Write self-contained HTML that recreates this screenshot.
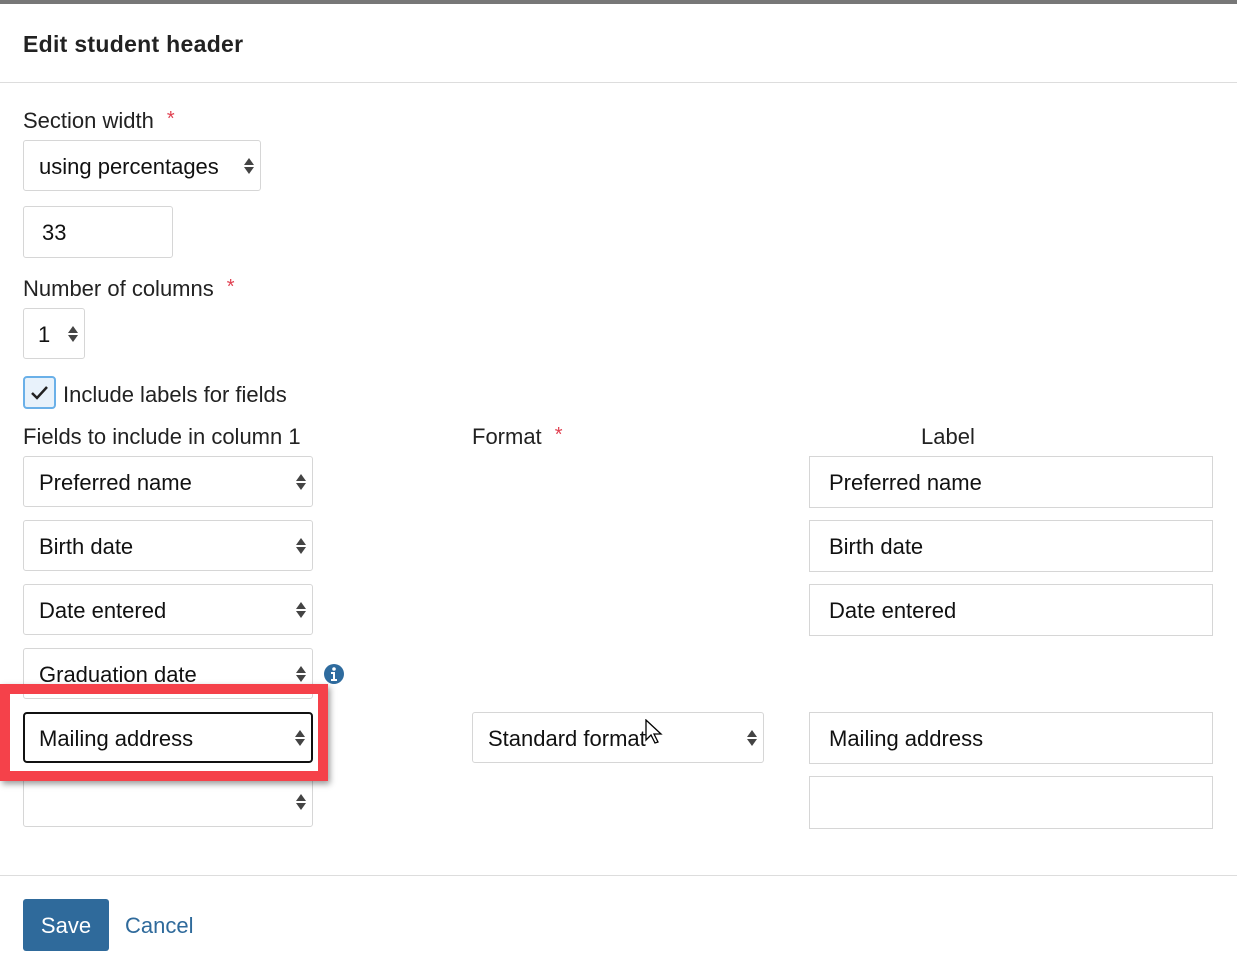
<!DOCTYPE html><html><head><style>
body{margin:0;width:1237px;height:966px;background:#fff;font-family:"Liberation Sans",sans-serif;color:#222;position:relative;overflow:hidden}
.a{position:absolute}
.box{position:absolute;border:1px solid #d6d6d6;border-radius:3px;box-sizing:border-box;font-size:22px;line-height:52px;padding-left:15px;color:#111;background:#fff}
.lbl{position:absolute;font-size:22px;color:#222}
.st{color:#e04050;font-size:20px;margin-left:13px;vertical-align:top}
.arr{position:absolute;right:6px;top:50%;margin-top:-9px}
</style></head><body>
<div class="a" style="left:0;top:0;width:1237px;height:4px;background:#777"></div>
<div class="lbl" style="left:23px;top:31px;font-size:23px;font-weight:bold;color:#222;letter-spacing:0.3px">Edit student header</div>
<div class="a" style="left:0;top:82px;width:1237px;height:1px;background:#ddd"></div>
<div class="lbl" style="left:23px;top:108px">Section width<span class="st">*</span></div>
<div class="box" style="left:23px;top:140px;width:238px;height:51px">using percentages<svg class="arr" width="10" height="18"><path d="M5 1L10 8H0Z M0 10H10L5 17Z" fill="#444"/></svg></div>
<div class="box" style="left:23px;top:206px;width:150px;height:52px;padding-left:18px">33</div>
<div class="lbl" style="left:23px;top:276px">Number of columns<span class="st">*</span></div>
<div class="box" style="left:23px;top:308px;width:62px;height:51px;padding-left:14px">1<svg class="arr" width="10" height="18"><path d="M5 1L10 8H0Z M0 10H10L5 17Z" fill="#444"/></svg></div>
<div class="a" style="left:23px;top:376px;width:33px;height:33px;box-sizing:border-box;border:2px solid #6ab0e8;border-radius:4px;background:#e8f2fb"><svg width="29" height="29"><path d="M7 15l5 5 10-11" stroke="#222" stroke-width="2.5" fill="none"/></svg></div>
<div class="lbl" style="left:63px;top:382px">Include labels for fields</div>
<div class="lbl" style="left:23px;top:424px">Fields to include in column 1</div>
<div class="lbl" style="left:472px;top:424px">Format<span class="st">*</span></div>
<div class="lbl" style="left:921px;top:424px">Label</div>
<div class="box" style="left:23px;top:456px;width:290px;height:51px">Preferred name<svg class="arr" width="10" height="18"><path d="M5 1L10 8H0Z M0 10H10L5 17Z" fill="#444"/></svg></div>
<div class="box" style="left:23px;top:520px;width:290px;height:51px">Birth date<svg class="arr" width="10" height="18"><path d="M5 1L10 8H0Z M0 10H10L5 17Z" fill="#444"/></svg></div>
<div class="box" style="left:23px;top:584px;width:290px;height:51px">Date entered<svg class="arr" width="10" height="18"><path d="M5 1L10 8H0Z M0 10H10L5 17Z" fill="#444"/></svg></div>
<div class="box" style="left:23px;top:648px;width:290px;height:51px">Graduation date<svg class="arr" width="10" height="18"><path d="M5 1L10 8H0Z M0 10H10L5 17Z" fill="#444"/></svg></div>
<svg class="a" style="left:323px;top:663px" width="22" height="22"><circle cx="11" cy="11" r="10" fill="#2e6b9e"/><circle cx="11" cy="6" r="1.8" fill="#fff"/><path d="M8 9h4v7h2v2H8v-2h2v-5H8z" fill="#fff"/></svg>
<div class="box" style="left:23px;top:776px;width:290px;height:51px"><svg class="arr" width="10" height="18"><path d="M5 1L10 8H0Z M0 10H10L5 17Z" fill="#444"/></svg></div>
<div class="a" style="left:0;top:684px;width:328px;height:97px;box-sizing:border-box;border:10px solid #f5414a;box-shadow:2px 3px 6px rgba(0,0,0,.4)"></div>
<div class="box" style="left:23px;top:712px;width:290px;height:51px;border:2px solid #111;border-radius:4px;line-height:50px;padding-left:14px">Mailing address<svg class="arr" width="10" height="18"><path d="M5 1L10 8H0Z M0 10H10L5 17Z" fill="#444"/></svg></div>
<div class="box" style="left:472px;top:712px;width:292px;height:51px">Standard format<svg class="arr" width="10" height="18"><path d="M5 1L10 8H0Z M0 10H10L5 17Z" fill="#444"/></svg></div>
<svg class="a" style="left:645px;top:719px" width="20" height="28"><path d="M1 1v20l5-5 4 8 3-1-4-8h7z" fill="#fff" stroke="#000" stroke-width="1.3"/></svg>
<div class="box" style="left:809px;top:456px;width:404px;height:52px;padding-left:19px;border-radius:0">Preferred name</div>
<div class="box" style="left:809px;top:520px;width:404px;height:52px;padding-left:19px;border-radius:0">Birth date</div>
<div class="box" style="left:809px;top:584px;width:404px;height:52px;padding-left:19px;border-radius:0">Date entered</div>
<div class="box" style="left:809px;top:712px;width:404px;height:52px;padding-left:19px;border-radius:0">Mailing address</div>
<div class="box" style="left:809px;top:776px;width:404px;height:53px;border-radius:0"></div>
<div class="a" style="left:0;top:875px;width:1237px;height:1px;background:#ddd"></div>
<div class="a" style="left:23px;top:899px;width:86px;height:52px;background:#2f6a9b;border-radius:3px;color:#fff;font-size:22px;line-height:54px;text-align:center">Save</div>
<div class="lbl" style="left:125px;top:913px;color:#2f6a9b">Cancel</div>
</body></html>
